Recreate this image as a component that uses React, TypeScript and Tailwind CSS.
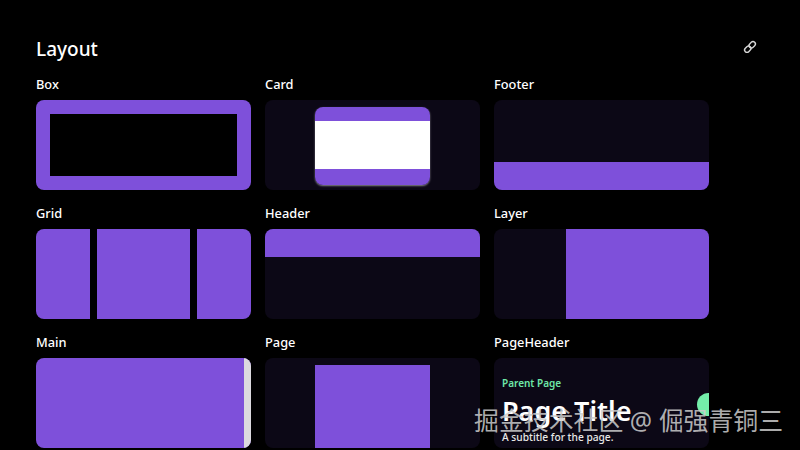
import React from "react";

const purple = "bg-[#7e50da]";
const dark = "bg-[#0c0816]";

function Tile({ label, children, className = "" }: { label: string; children?: React.ReactNode; className?: string }) {
  return (
    <div className="flex flex-col">
      <div className="h-[29px] pt-[4px] text-[12.8px] leading-[18px] font-medium text-white">{label}</div>
      <div className={`h-[90px] rounded-[8px] overflow-hidden ${className}`}>{children}</div>
    </div>
  );
}

export default function App() {
  return (
    <div
      className="relative w-[800px] h-[450px] overflow-hidden bg-black text-white pl-[36px]"
      style={{ fontFamily: '"Noto Sans", "Noto Sans CJK SC", sans-serif' }}
    >
      <div className="flex items-start justify-between w-[722px] h-[71px] pt-[36px]">
        <h1 className="text-[19px] leading-[26px] font-medium text-white">Layout</h1>
        <svg width="16" height="16" viewBox="0 0 16 16" fill="none" stroke="#d8d8d8" strokeWidth="1.4" className="mt-[3px]">
          <g transform="rotate(-45 8 8)">
            <rect x="1.4" y="5.6" width="7" height="4.8" rx="2.4" />
            <rect x="7.6" y="5.6" width="7" height="4.8" rx="2.4" />
          </g>
        </svg>
      </div>

      <div className="grid grid-cols-[215px_215px_215px] gap-x-[14px] gap-y-[10px]">
        <Tile label="Box" className={`${purple} p-[14px]`}>
          <div className="h-full bg-black" />
        </Tile>
        <Tile label="Card" className={`${dark} flex justify-center items-start pt-[7px]`}>
          <div className="w-[115px] h-[78px] rounded-[8px] overflow-hidden flex flex-col shadow-[0_1px_2px_rgba(255,255,255,0.5)]">
            <div className={`h-[14px] ${purple}`} />
            <div className="h-[48px] bg-white" />
            <div className={`h-[16px] ${purple}`} />
          </div>
        </Tile>
        <Tile label="Footer" className={`${dark} flex flex-col justify-end`}>
          <div className={`h-[28px] ${purple}`} />
        </Tile>

        <Tile label="Grid" className="flex gap-[7px]">
          <div className={`w-[54px] ${purple}`} />
          <div className={`flex-1 ${purple}`} />
          <div className={`w-[54px] ${purple}`} />
        </Tile>
        <Tile label="Header" className={dark}>
          <div className={`h-[28px] ${purple}`} />
        </Tile>
        <Tile label="Layer" className={`${dark} flex justify-end`}>
          <div className={`w-[143px] ${purple}`} />
        </Tile>

        <Tile label="Main" className={`${purple} flex justify-end`}>
          <div className="w-[7px] bg-[#dcdadf]" />
        </Tile>
        <Tile label="Page" className={`${dark} flex justify-center items-end`}>
          <div className={`w-[115px] h-[83px] ${purple}`} />
        </Tile>
        <Tile label="PageHeader" className={`${dark} relative px-[8px] pt-[18px]`}>
          <div className="text-[10px] leading-[14px] font-semibold text-[#6ee7a8]">Parent Page</div>
          <div className="text-[27px] leading-[34px] mt-[4px] font-semibold text-white">Page Title</div>
          <div className="text-[10.2px] leading-[14px] mt-[2px] font-medium text-[#e8e8e8]">A subtitle for the page.</div>
          <div className="absolute left-[203px] top-[35px] w-[23px] h-[23px] rounded-full bg-[#74eeaa]" />
        </Tile>
      </div>

      <div className="absolute left-[474px] top-[404px] text-[24.9px] leading-[32px] whitespace-nowrap text-[rgba(205,205,205,0.85)]">
        掘金技术社区 @ 倔强青铜三
      </div>
    </div>
  );
}
